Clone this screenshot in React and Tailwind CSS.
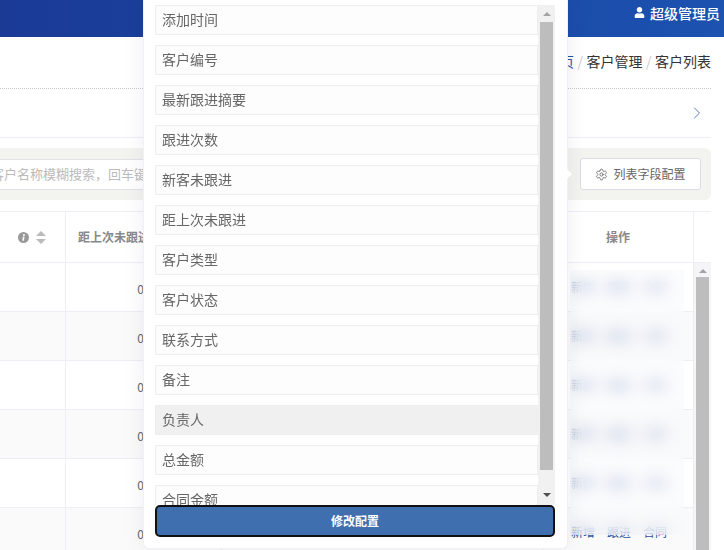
import { ChevronRight, Settings } from "lucide-react"
import { FaUser } from "react-icons/fa"

const FIELDS = [
  "添加时间",
  "客户编号",
  "最新跟进摘要",
  "跟进次数",
  "新客未跟进",
  "距上次未跟进",
  "客户类型",
  "客户状态",
  "联系方式",
  "备注",
  "负责人",
  "总金额",
  "合同金额",
]

const ROWS = [0, 1, 2, 3, 4, 5]

function TableHeader() {
  return (
    <div className="grid h-[52px] grid-cols-[66px_156px_1fr_152px_17px] border-y border-[#eeeef5] text-xs font-bold text-[#888]">
      <div className="flex items-center justify-end gap-[7px] border-r border-[#eeeef5] pr-[19px]">
        <svg className="h-[11px] w-[11px]" viewBox="0 0 12 12">
          <circle cx="6" cy="6" r="6" fill="#999" />
          <rect x="5.2" y="5" width="1.8" height="4.4" fill="#fff" transform="rotate(10 6 6)" />
          <circle cx="6.5" cy="3.3" r="1.1" fill="#fff" />
        </svg>
        <svg className="h-[13px] w-[10px]" viewBox="0 0 10 13">
          <path d="M5 0l5 5H0z" fill="#bbb" />
          <path d="M5 13L0 8h10z" fill="#bbb" />
        </svg>
      </div>
      <div className="flex items-center border-r border-[#eeeef5] pl-[12px]">距上次未跟进</div>
      <div />
      <div className="flex items-center justify-center border-x border-[#eeeef5]">操作</div>
      <div />
    </div>
  )
}

function TableRow({ striped }) {
  return (
    <div
      className={`grid h-[49px] grid-cols-[66px_156px_1fr_152px] border-b border-[#eeeef5] text-xs ${
        striped ? "bg-[#fafafa]" : "bg-white"
      }`}
    >
      <div className="border-r border-[#eeeef5]" />
      <div className="flex items-center justify-center border-r border-[#eeeef5] pt-[3px] pr-[6px] text-[#666]">0</div>
      <div />
      <div className="flex items-center gap-[12px] border-x border-[#eeeef5] pl-[28px] text-[#2b4f9e]">
        <span>新增</span>
        <span>跟进</span>
        <span>合同</span>
      </div>
    </div>
  )
}

function PageScrollbar() {
  return (
    <div className="flex w-[17px] flex-col items-center bg-[#f5f5f7] pt-[6px]">
      <div className="h-0 w-0 border-x-[4px] border-b-[4px] border-x-transparent border-b-[#a3a3a3]" />
      <div className="mt-[4px] h-[300px] w-[13px] bg-[#bdbdbd]" />
    </div>
  )
}

function FieldPopup() {
  return (
    <div className="absolute top-0 left-[143px] flex h-[549px] w-[425px] flex-col rounded-b-md border-x border-b border-[#f0f0f6] bg-white px-[11px] pt-[5px] shadow-[0_0_22px_rgba(30,30,70,0.07)]">
      <div className="absolute top-[169px] right-[-5px] h-0 w-0 border-y-[5px] border-l-[5px] border-y-transparent border-l-white" />
      <div className="flex h-[500px] overflow-hidden">
        <div className="flex w-[383px] flex-col gap-[10px]">
          {FIELDS.map((name) => (
            <div
              key={name}
              className={`flex h-[30px] shrink-0 items-center border border-[#eeeeee] px-[6px] pb-[2px] text-sm ${
                name === "负责人" ? "bg-[#f0f0f0]" : "bg-[#fdfdfd]"
              } text-[#666]`}
            >
              {name}
            </div>
          ))}
        </div>
        <div className="flex w-[17px] flex-col items-center bg-[#f1f1f1] pt-[7px]">
          <div className="h-0 w-0 border-x-[4px] border-b-[4px] border-x-transparent border-b-[#a3a3a3]" />
          <div className="mt-[6px] h-[448px] w-[13px] bg-[#bdbdbd]" />
          <div className="mt-[23px] h-0 w-0 border-x-[4px] border-t-[4px] border-x-transparent border-t-[#505050]" />
        </div>
      </div>
      <button
        type="button"
        className="h-[32px] w-[400px] rounded-[5px] border-2 border-[#111] bg-[#406fb0] text-xs font-bold text-white"
      >
        修改配置
      </button>
    </div>
  )
}

export default function App() {
  return (
    <div className="relative h-[550px] w-[724px] overflow-hidden bg-white font-['Noto_Sans_CJK_SC','Noto_Sans',sans-serif]">
      <header className="flex h-[37px] items-center justify-end bg-gradient-to-r from-[#1a3a96] to-[#1c52b0] pr-[4px] pb-[12px] text-sm font-medium text-white">
        <FaUser className="mr-[5px] h-[11px] w-[11px]" />
        超级管理员
      </header>

      <div className="pr-[13px]">
        <div className="flex h-[52px] items-center justify-end border-b border-dotted border-[#c8c8cc] pb-[3px] text-sm text-[#333]">
          <span className="text-[#2b4f9e]">首页</span>
          <span className="mx-[3.5px] text-[#ccc]">/</span>
          <span>客户管理</span>
          <span className="mx-[3.5px] text-[#ccc]">/</span>
          <span>客户列表</span>
        </div>

        <div className="flex h-[49px] items-center justify-end border-b border-[#eeeef5] pr-[4px]">
          <ChevronRight className="h-[20px] w-[20px] text-[#5b7bb0]" strokeWidth={1.2} />
        </div>

        <div className="mt-[10px] flex h-[52px] items-center justify-between rounded-r-md bg-[#f3f3f0] pr-[10px]">
          <input
            readOnly
            className="-ml-[20px] h-[31px] w-[520px] border border-[#e2e2ea] bg-white pb-[2px] pl-[10px] text-[13px] placeholder:text-[#bbb]"
            placeholder="客户名称模糊搜索，回车键搜索"
          />
          <button
            type="button"
            className="flex h-[32px] w-[121px] items-center justify-center gap-[5px] rounded-[3px] border border-[#dcdce8] bg-white text-xs text-[#666]"
          >
            <Settings className="h-[13px] w-[13px]" strokeWidth={1.6} />
            列表字段配置
          </button>
        </div>

        <div className="mt-[11px]">
          <TableHeader />
          <div className="grid grid-cols-[1fr_17px]">
            <div>
              {ROWS.map((i) => (
                <TableRow key={i} striped={i % 2 === 1} />
              ))}
            </div>
            <PageScrollbar />
          </div>
        </div>
      </div>

      {/* blurred privacy cover over the action links */}
      <div className="absolute top-[270px] left-[570px] h-[265px] w-[114px] bg-[#f8f9fb]/50 backdrop-blur-[8px]" />

      <FieldPopup />
    </div>
  )
}
